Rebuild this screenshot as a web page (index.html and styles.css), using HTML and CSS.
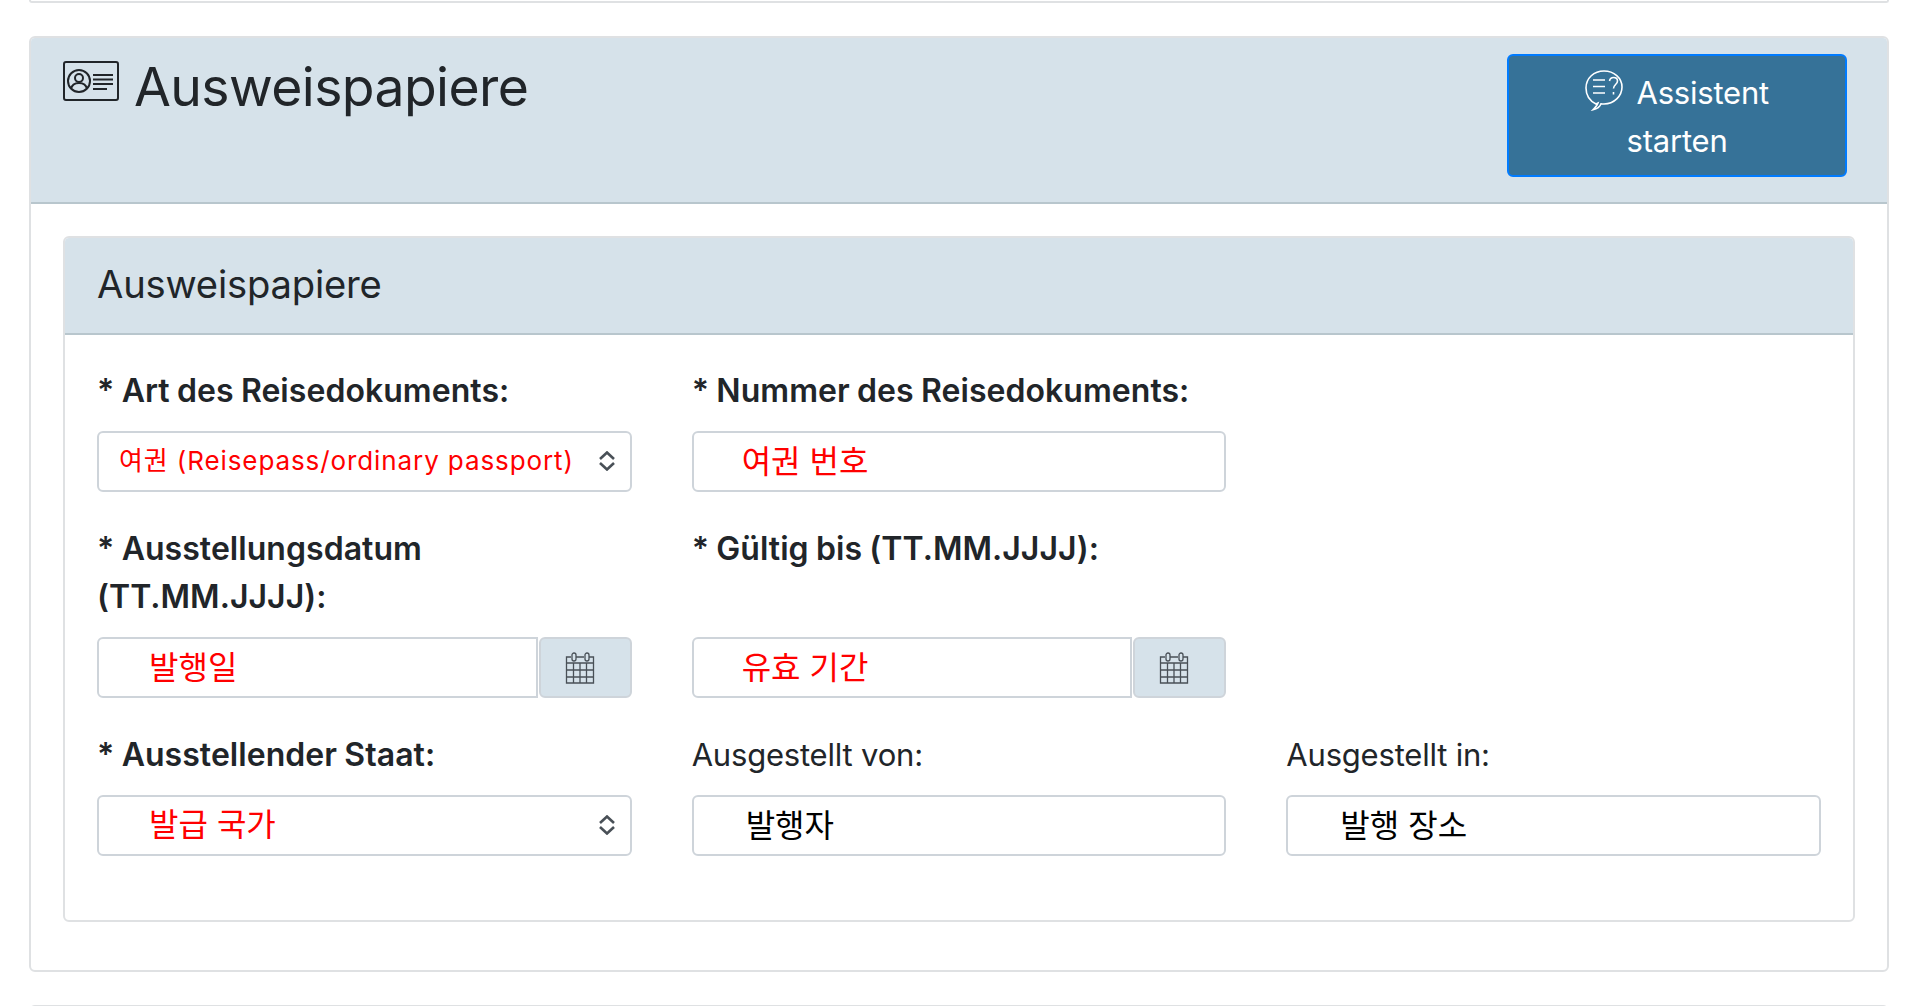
FILE: index.html
```html
<!DOCTYPE html>
<html lang="de">
<head>
<meta charset="utf-8">
<title>Ausweispapiere</title>
<link rel="stylesheet" href="styles.css">
</head>
<body>
<div class="page">
  <div class="card-stub"></div>
  <section class="card">
    <header class="card-head">
      <h1 class="title">
        <svg class="id-icon" viewBox="0 0 56 40" fill="none" stroke="#212529" stroke-width="2">
          <rect x="1" y="1" width="54" height="38" rx="2"/>
          <circle cx="16" cy="20" r="11"/>
          <circle cx="16" cy="17" r="4"/>
          <path d="M8 28c1-5 4-6 8-6s7 1 8 6"/>
          <path d="M30 14h20M30 18.500h20M30 23h20M30 28h14"/>
        </svg>
        <span>Ausweispapiere</span>
      </h1>
      <button class="assist" type="button">
        <svg class="chat-icon" viewBox="0 0 38 41" fill="none" stroke="#fff" stroke-width="1.600">
          <path d="M11 34C5 31 1 26 1 18 1 8 9 1 19 1s18 7 18 16-8 17-18 17c-1 0-2 0-3-.2-1 2.800-4 5.200-8 6 2-2 4-3.500 5-6.800z"/>
          <path d="M8 10h12M8 16.500h12M8 23h12"/>
          <path d="M24.500 11c.5-2.500 2-3.500 4-3.500 2.500 0 4 1.500 4 3.500 0 3.500-4 3.500-4 7.500M28.500 22v2.500"/>
        </svg>
        <span class="assist-first">Assistent</span><br>starten
      </button>
    </header>
    <div class="card-main">
      <section class="inner">
        <h2 class="inner-head">Ausweispapiere</h2>
        <form class="fields">
          <div class="field">
            <label class="req">* Art des Reisedokuments:</label>
            <div class="select-wrap">
              <select class="control select-passport"><option>여권 (Reisepass/ordinary passport)</option></select>
              <svg class="updown" viewBox="0 0 18 20" fill="none" stroke="#495057" stroke-width="2.600"><path d="M2 8l7-6.500L16 8M2 12l7 6.500L16 12"/></svg>
            </div>
          </div>
          <div class="field">
            <label class="req">* Nummer des Reisedokuments:</label>
            <input class="control red ind-a" value="여권 번호">
          </div>
          <div class="field"></div>

          <div class="field">
            <label class="req">* Ausstellungsdatum (TT.MM.JJJJ):</label>
            <div class="date-group">
              <input class="control red ind-b date-input" value="발행일">
              <span class="addon">
                <svg class="cal" viewBox="0 0 30 32" fill="none" stroke="#495057" stroke-width="1.300">
                  <path d="M6 5H1.500v26h27V5H24M11 5h8"/>
                  <rect x="7" y="1" width="4" height="8" rx="2"/>
                  <rect x="20" y="1" width="4" height="8" rx="2"/>
                  <path d="M1.500 11h27M1.500 18h27M1.500 25h27M8.500 11v20M15 11v20M21.500 11v20"/>
                </svg>
              </span>
            </div>
          </div>
          <div class="field">
            <label class="req">* Gültig bis (TT.MM.JJJJ):</label>
            <div class="date-group">
              <input class="control red ind-a date-input" value="유효 기간">
              <span class="addon">
                <svg class="cal" viewBox="0 0 30 32" fill="none" stroke="#495057" stroke-width="1.300">
                  <path d="M6 5H1.500v26h27V5H24M11 5h8"/>
                  <rect x="7" y="1" width="4" height="8" rx="2"/>
                  <rect x="20" y="1" width="4" height="8" rx="2"/>
                  <path d="M1.500 11h27M1.500 18h27M1.500 25h27M8.500 11v20M15 11v20M21.500 11v20"/>
                </svg>
              </span>
            </div>
          </div>
          <div class="field"></div>

          <div class="field">
            <label class="req">* Ausstellender Staat:</label>
            <div class="select-wrap">
              <select class="control red ind-b select-state"><option>발급 국가</option></select>
              <svg class="updown" viewBox="0 0 18 20" fill="none" stroke="#495057" stroke-width="2.600"><path d="M2 8l7-6.500L16 8M2 12l7 6.500L16 12"/></svg>
            </div>
          </div>
          <div class="field">
            <label>Ausgestellt von:</label>
            <input class="control ind-c" value="발행자">
          </div>
          <div class="field">
            <label>Ausgestellt in:</label>
            <input class="control ind-c" value="발행 장소">
          </div>
        </form>
      </section>
    </div>
  </section>
  <div class="card-next"></div>
</div>
</body>
</html>
```

FILE: styles.css
```css
* { box-sizing: border-box; }
html, body { margin: 0; height: 100%; background: #fff; overflow: hidden; }
body { font-family: Inter, "Noto Sans CJK KR", sans-serif; color: #212529; font-size: 31px; line-height: 48px; letter-spacing: -0.2px; }
.page { padding: 0 29px; }
.card-stub {
  height: 3px;
  border: 2px solid #dfe1e3;
  border-top: 0;
  border-radius: 0 0 6px 6px;
  margin-bottom: 33px;
}
.card {
  border: 2px solid #dfe1e3;
  border-radius: 6px;
  height: 936px;
  margin-bottom: 33px;
  overflow: hidden;
}
.card-next {
  height: 20px;
  border: 2px solid #dfe1e3;
  border-bottom: 0;
  border-radius: 6px 6px 0 0;
}
.card-head {
  height: 166px;
  background: #d6e2ea;
  border-bottom: 2px solid #b8c6cd;
  display: flex;
  justify-content: space-between;
  align-items: flex-start;
  padding: 16px 40px 0 32px;
}
.title {
  display: flex;
  align-items: flex-start;
  gap: 15px;
  margin: 0;
  font-size: 53.500px;
  font-weight: 400;
  letter-spacing: -0.6px;
  line-height: 66px;
}
.id-icon { width: 56px; height: 40px; margin-top: 7px; flex: none; }
.assist {
  width: 340px;
  height: 123px;
  background: #367298;
  border: 2px solid #007bff;
  border-radius: 6px;
  color: #fff;
  font: inherit;
  letter-spacing: inherit;
  line-height: 48px;
  padding: 13px 0 13px;
  text-align: center;
}
.chat-icon { width: 38px; height: 41px; vertical-align: -7px; margin-right: 5px; }
.card-main { padding: 32px 32px 0; }
.inner { border: 2px solid #dfe1e3; border-radius: 6px; height: 686px; overflow: hidden; }
.inner-head {
  margin: 0;
  height: 97px;
  background: #d6e2ea;
  border-bottom: 2px solid #b8c6cd;
  padding: 0 32px 4px;
  display: flex;
  align-items: center;
  font-size: 38.200px;
  font-weight: 400;
}
.fields {
  display: grid;
  grid-template-columns: repeat(3, 1fr);
  column-gap: 60px;
  row-gap: 33px;
  padding: 32px 32px 0;
}
label { display: block; margin-bottom: 16px; }
.req { font-weight: 600; font-size: 32px; letter-spacing: 0.05px; word-spacing: -0.8px; }
.field { display: flex; flex-direction: column; justify-content: flex-start; }
.field > label { flex: 1 0 auto; }
.control {
  display: block;
  width: 100%;
  height: 61px;
  border: 2px solid #ced4da;
  border-radius: 6px;
  background: #fff;
  font-family: Inter, "Noto Sans CJK KR", sans-serif;
  font-size: 32px;
  color: #000;
  outline: none;
  padding-bottom: 6px;
  appearance: none;
  -webkit-appearance: none;
}
select.control { padding-bottom: 3px; }
.red { color: #f00; }
.ind-a { padding-left: 48px; }
.ind-b { padding-left: 50px; }
.ind-c { padding-left: 52px; }
.select-passport { color: #f00; padding-left: 20px; font-size: 26px; letter-spacing: 0.9px; }
.select-wrap { position: relative; }
.updown { position: absolute; right: 16px; top: 20px; width: 18px; height: 20px; }
.date-group { display: flex; }
.date-input { flex: 1; min-width: 0; border-radius: 6px 0 0 6px; }
.addon {
  flex: none;
  width: 93px;
  height: 61px;
  margin-left: 1px;
  background: #d6e2ea;
  border: 2px solid #ced4da;
  border-radius: 6px;
  display: flex;
  align-items: center;
  justify-content: center;
}
.cal { width: 30px; height: 32px; margin-right: 11px; }
```
